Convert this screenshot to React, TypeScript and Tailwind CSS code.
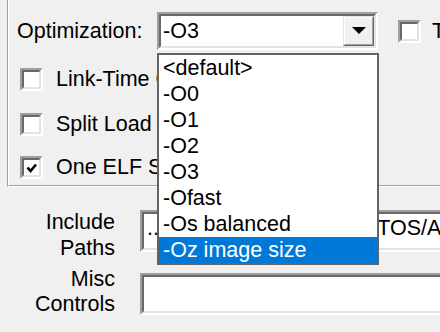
const OPTIONS = [
  "<default>",
  "-O0",
  "-O1",
  "-O2",
  "-O3",
  "-Ofast",
  "-Os balanced",
  "-Oz image size",
];

function Sunken({ className, children }: { className: string; children?: React.ReactNode }) {
  return (
    <div
      className={`shrink-0 border-2 border-t-[#a0a0a0] border-l-[#a0a0a0] border-r-white border-b-white ${className}`}
    >
      <div className="h-full w-full overflow-hidden border-2 border-t-[#696969] border-l-[#696969] border-r-[#e3e3e3] border-b-[#e3e3e3] bg-white">
        {children}
      </div>
    </div>
  );
}

function Checkbox({ checked }: { checked?: boolean }) {
  return (
    <Sunken className="h-[23px] w-[23px]">
      {checked && (
        <svg width="15" height="15" viewBox="0 0 15 15" className="block">
          <path d="M3.5 7.5 L6.5 11 L12 4.5" fill="none" stroke="black" strokeWidth="2.6" />
        </svg>
      )}
    </Sunken>
  );
}

export default function App() {
  return (
    <div className="relative h-[332px] w-[440px] overflow-hidden bg-[#f0f0f0] font-['Liberation_Sans',Arial,sans-serif] text-[21.5px] leading-[26px] text-black">
      {/* group box (etched edge) */}
      <div className="ml-[7px] h-[187px] border-b border-l border-b-white border-l-[#a0a0a0]">
        <div className="h-full border-b border-l border-b-[#a0a0a0] border-l-white">
          <div className="flex items-center pl-[8px] pt-[12px]">
            <span className="w-[140px] shrink-0">Optimization:</span>
            <Sunken className="h-[38px] w-[221px]">
              <div className="flex h-full items-center">
                <span className="flex-1 pl-[2px]">-O3</span>
                <div className="h-full w-[31px] border border-t-[#e3e3e3] border-l-[#e3e3e3] border-r-[#696969] border-b-[#696969]">
                  <div className="flex h-full items-center justify-center border border-t-white border-l-white border-r-[#a0a0a0] border-b-[#a0a0a0] bg-[#f0f0f0]">
                    <svg width="14" height="8" viewBox="0 0 14 8">
                      <path d="M0 0 H14 L7 7 Z" fill="black" />
                    </svg>
                  </div>
                </div>
              </div>
            </Sunken>
            <div className="ml-[20px] shrink-0">
              <Checkbox />
            </div>
            <span className="ml-[11px] shrink-0 whitespace-nowrap">Thumb Mode</span>
          </div>

          <div className="mt-[16px] flex items-center pl-[11px]">
            <Checkbox />
            <span className="ml-[13px] whitespace-nowrap">Link-Time Optimization</span>
          </div>
          <div className="mt-[19px] flex items-center pl-[11px]">
            <Checkbox />
            <span className="ml-[13px] whitespace-nowrap">Split Load and Store Multiple</span>
          </div>
          <div className="mt-[17px] flex items-center pl-[11px]">
            <Checkbox checked />
            <span className="ml-[13px] whitespace-nowrap">One ELF Section per Function</span>
          </div>
        </div>
      </div>

      {/* include paths */}
      <div className="mt-[22px] flex items-start">
        <div className="w-[115px] shrink-0 text-right">
          Include
          <br />
          Paths
        </div>
        <Sunken className="ml-[25px] mt-[1px] h-[42px] w-[320px]">
          <div className="whitespace-nowrap pl-[3px] pt-[1px]">../../../Third_Party/FreeRTOS/ARM_CM4F</div>
        </Sunken>
      </div>

      {/* misc controls */}
      <div className="mt-[6px] flex items-start">
        <div className="w-[115px] shrink-0 text-right leading-[25px]">
          Misc
          <br />
          Controls
        </div>
        <Sunken className="ml-[25px] mt-[6px] h-[42px] w-[320px]" />
      </div>

      {/* open dropdown list */}
      <div className="absolute left-[157px] top-[53px] w-[222px] border-2 border-[#646464] bg-white">
        {OPTIONS.map((o, i) => (
          <div
            key={o}
            className={`h-[26px] whitespace-nowrap pl-[4px] ${
              i === OPTIONS.length - 1 ? "bg-[#0078d7] text-white" : ""
            }`}
          >
            {o}
          </div>
        ))}
      </div>
    </div>
  );
}
